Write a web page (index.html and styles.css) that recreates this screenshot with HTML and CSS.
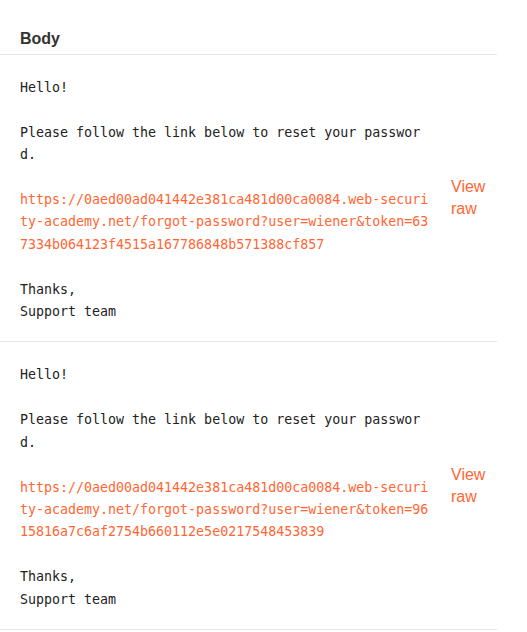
FILE: index.html
```html
<!DOCTYPE html>
<html>
<head>
<meta charset="utf-8">
<link rel="stylesheet" href="styles.css">
</head>
<body>
<div class="table">
  <div class="head">Body</div>
  <div class="row">
    <div class="body-cell">Hello!

Please follow the link below to reset your password.

<a class="link" href="#">https://0aed00ad041442e381ca481d00ca0084.web-security-academy.net/forgot-password?user=wiener&amp;token=637334b064123f4515a167786848b571388cf857</a>

Thanks,
Support team</div>
    <div class="view-cell"><a class="view" href="#">View raw</a></div>
  </div>
  <div class="row">
    <div class="body-cell">Hello!

Please follow the link below to reset your password.

<a class="link" href="#">https://0aed00ad041442e381ca481d00ca0084.web-security-academy.net/forgot-password?user=wiener&amp;token=9615816a7c6af2754b660112e5e0217548453839</a>

Thanks,
Support team</div>
    <div class="view-cell"><a class="view" href="#">View raw</a></div>
  </div>
</div>
</body>
</html>
```

FILE: styles.css
```css
html, body {
  margin: 0;
  padding: 0;
  background: #ffffff;
}

.table {
  width: 497px;
  font-family: "Liberation Sans", Arial, sans-serif;
  color: #333332;
}

.head {
  padding: 29px 20px 5px 20px;
  font-size: 16px;
  line-height: 20px;
  font-weight: bold;
  border-bottom: 1px solid #e6e6e6;
}

.row {
  display: flex;
  border-bottom: 1px solid #e6e6e6;
}

.body-cell {
  width: 410px;
  padding: 22px 0 18px 20px;
  font-family: "DejaVu Sans Mono", "Liberation Mono", monospace;
  font-size: 13.3px;
  line-height: 22.4px;
  white-space: pre-wrap;
  word-break: break-all;
  color: #222222;
}

.link {
  color: #ff6633;
  text-decoration: none;
}

.view-cell {
  width: 46px;
  padding-left: 21px;
  align-self: center;
  font-size: 16px;
  line-height: 22px;
}

.view {
  color: #ff6633;
  text-decoration: none;
}
```
